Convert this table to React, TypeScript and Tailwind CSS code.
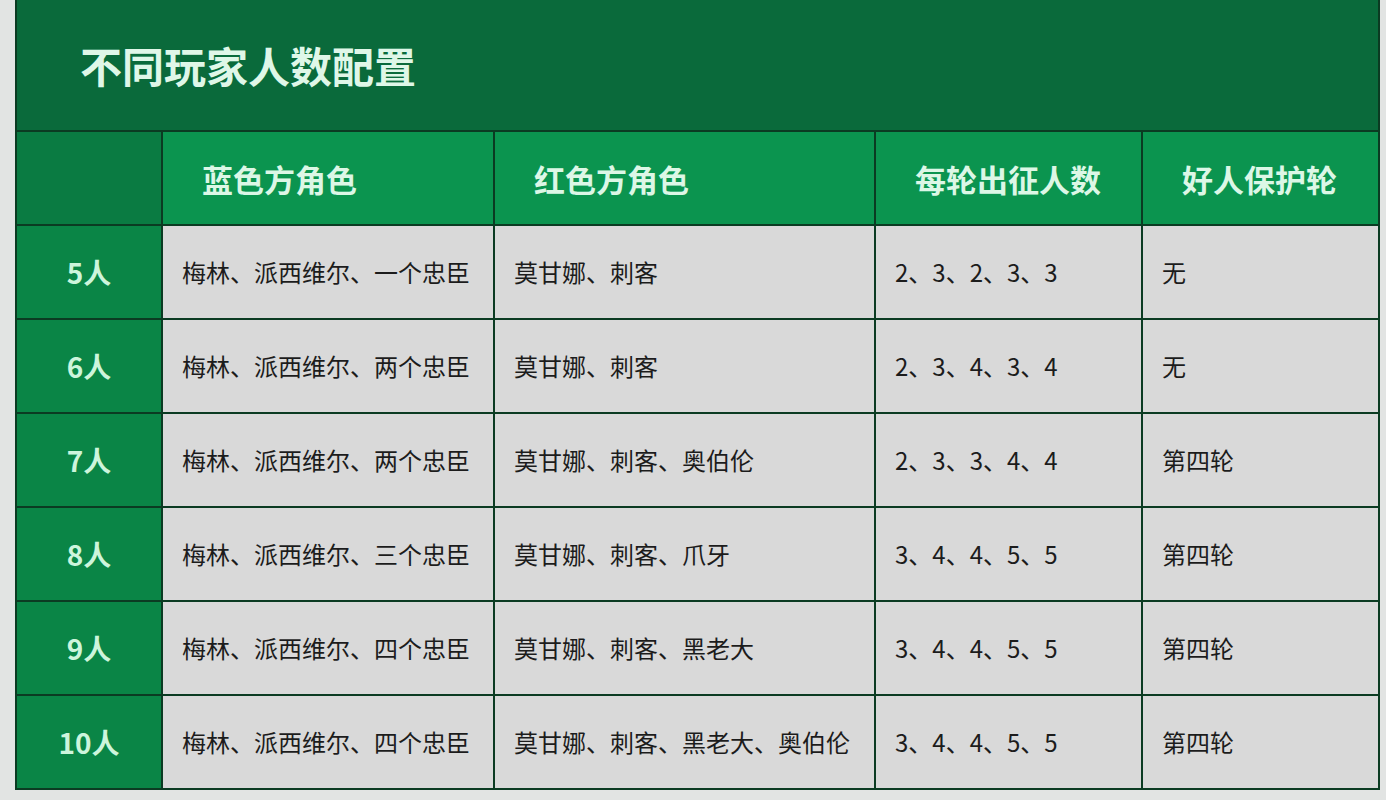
import React from "react";

const headers = ["蓝色方角色", "红色方角色", "每轮出征人数", "好人保护轮"];

const rows: string[][] = [
  ["5人", "梅林、派西维尔、一个忠臣", "莫甘娜、刺客", "2、3、2、3、3", "无"],
  ["6人", "梅林、派西维尔、两个忠臣", "莫甘娜、刺客", "2、3、4、3、4", "无"],
  ["7人", "梅林、派西维尔、两个忠臣", "莫甘娜、刺客、奥伯伦", "2、3、3、4、4", "第四轮"],
  ["8人", "梅林、派西维尔、三个忠臣", "莫甘娜、刺客、爪牙", "3、4、4、5、5", "第四轮"],
  ["9人", "梅林、派西维尔、四个忠臣", "莫甘娜、刺客、黑老大", "3、4、4、5、5", "第四轮"],
  ["10人", "梅林、派西维尔、四个忠臣", "莫甘娜、刺客、黑老大、奥伯伦", "3、4、4、5、5", "第四轮"],
];

export default function App() {
  return (
    <div
      className="w-[1386px] h-[800px] bg-[#e2e4e3] pl-[15px]"
      style={{ fontFamily: '"Noto Sans CJK SC", "Noto Sans", sans-serif' }}
    >
      <div className="w-[1365px] bg-[#0b3b22] px-[2px] pb-[2px] flex flex-col">
        <div className="h-[130px] bg-[#0a6a3b] flex items-center pl-[63px]">
          <span className="text-[42px] font-bold text-[#dff7e8] leading-none">
            不同玩家人数配置
          </span>
        </div>
        <div className="grid grid-cols-[144px_330px_379px_265px_235px] gap-[2px] pt-[2px]">
          <div className="h-[92px] bg-[#0a7b42]" />
          {headers.map((h) => (
            <div
              key={h}
              className="h-[92px] bg-[#0b944f] flex items-center pl-[39px] text-[31px] font-bold text-[#dcf7e6] leading-none"
            >
              {h}
            </div>
          ))}
          {rows.map((r) => (
            <React.Fragment key={r[0]}>
              <div className="h-[92px] bg-[#0a8546] flex items-center justify-center text-[28px] font-semibold text-[#cdf5dc] leading-none">
                {r[0]}
              </div>
              {r.slice(1).map((c, i) => (
                <div
                  key={i}
                  className="h-[92px] bg-[#d9d9d9] flex items-center pl-[19px] text-[24px] text-[#1c1c1c] leading-none"
                >
                  {c}
                </div>
              ))}
            </React.Fragment>
          ))}
        </div>
      </div>
    </div>
  );
}
